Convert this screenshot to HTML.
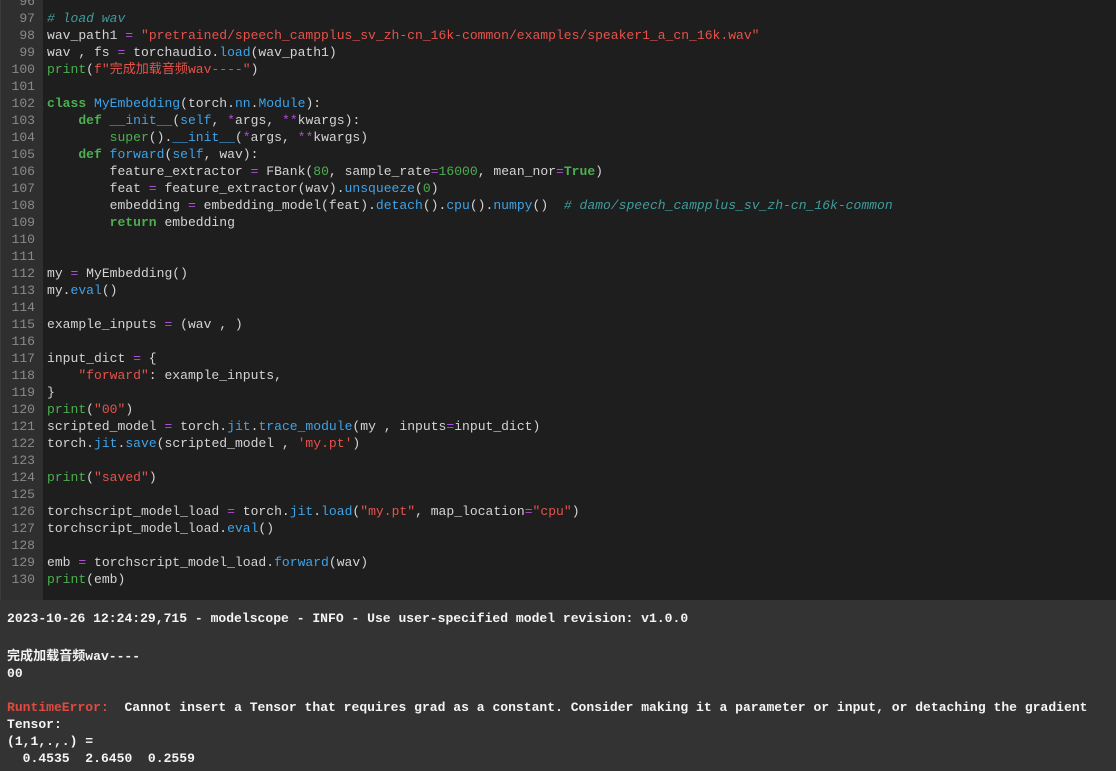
<!DOCTYPE html>
<html><head><meta charset="utf-8"><style>
html,body{margin:0;padding:0;width:1116px;height:771px;overflow:hidden;background:#1e1e1e}
body{font-family:"Liberation Mono","Noto Sans CJK SC",monospace;font-size:13.05px}
.code{position:absolute;left:0;top:0;width:1116px;height:600px;background:#1e1e1e}
.gut{position:absolute;left:0;top:0;width:42px;height:600px;background:#2f2f2f;border-left:1px solid #3a3a3a}
.lines{position:absolute;top:-7px;left:0;width:1116px}
.l{height:17px;line-height:17px;white-space:pre;position:relative;color:#d4d4d4}
.n{position:absolute;left:0;width:35px;text-align:right;color:#8a8a8a}
.t{position:absolute;left:47px}
.c{color:#3f9c9c;font-style:italic}.s{color:#e5534b}.k{color:#4caf50;font-weight:bold}.b{color:#3ea3e8}.o{color:#b14ed8}.g{color:#4caf50}
.out{position:absolute;left:0;top:600px;width:1116px;height:171px;background:#333333;color:#f4f4f4;font-weight:bold}
.out .l{color:#f4f4f4;padding-left:7px}
.err{color:#e04a3f}
</style></head><body>
<div class="code"><div class="gut"></div>
<div class="lines">
<div class="l"><span class="n">96</span><span class="t"></span></div>
<div class="l"><span class="n">97</span><span class="t"><span class="c"># load wav</span></span></div>
<div class="l"><span class="n">98</span><span class="t">wav_path1 <span class="o">=</span> <span class="s">"pretrained/speech_campplus_sv_zh-cn_16k-common/examples/speaker1_a_cn_16k.wav"</span></span></div>
<div class="l"><span class="n">99</span><span class="t">wav , fs <span class="o">=</span> torchaudio.<span class="b">load</span>(wav_path1)</span></div>
<div class="l"><span class="n">100</span><span class="t"><span class="g">print</span>(<span class="s">f"完成加载音频wav----"</span>)</span></div>
<div class="l"><span class="n">101</span><span class="t"></span></div>
<div class="l"><span class="n">102</span><span class="t"><span class="k">class</span> <span class="b">MyEmbedding</span>(torch.<span class="b">nn</span>.<span class="b">Module</span>):</span></div>
<div class="l"><span class="n">103</span><span class="t">    <span class="k">def</span> <span class="b">__init__</span>(<span class="b">self</span>, <span class="o">*</span>args, <span class="o">**</span>kwargs):</span></div>
<div class="l"><span class="n">104</span><span class="t">        <span class="g">super</span>().<span class="b">__init__</span>(<span class="o">*</span>args, <span class="o">**</span>kwargs)</span></div>
<div class="l"><span class="n">105</span><span class="t">    <span class="k">def</span> <span class="b">forward</span>(<span class="b">self</span>, wav):</span></div>
<div class="l"><span class="n">106</span><span class="t">        feature_extractor <span class="o">=</span> FBank(<span class="g">80</span>, sample_rate<span class="o">=</span><span class="g">16000</span>, mean_nor<span class="o">=</span><span class="k">True</span>)</span></div>
<div class="l"><span class="n">107</span><span class="t">        feat <span class="o">=</span> feature_extractor(wav).<span class="b">unsqueeze</span>(<span class="g">0</span>)</span></div>
<div class="l"><span class="n">108</span><span class="t">        embedding <span class="o">=</span> embedding_model(feat).<span class="b">detach</span>().<span class="b">cpu</span>().<span class="b">numpy</span>()  <span class="c"># damo/speech_campplus_sv_zh-cn_16k-common</span></span></div>
<div class="l"><span class="n">109</span><span class="t">        <span class="k">return</span> embedding</span></div>
<div class="l"><span class="n">110</span><span class="t"></span></div>
<div class="l"><span class="n">111</span><span class="t"></span></div>
<div class="l"><span class="n">112</span><span class="t">my <span class="o">=</span> MyEmbedding()</span></div>
<div class="l"><span class="n">113</span><span class="t">my.<span class="b">eval</span>()</span></div>
<div class="l"><span class="n">114</span><span class="t"></span></div>
<div class="l"><span class="n">115</span><span class="t">example_inputs <span class="o">=</span> (wav , )</span></div>
<div class="l"><span class="n">116</span><span class="t"></span></div>
<div class="l"><span class="n">117</span><span class="t">input_dict <span class="o">=</span> {</span></div>
<div class="l"><span class="n">118</span><span class="t">    <span class="s">"forward"</span>: example_inputs,</span></div>
<div class="l"><span class="n">119</span><span class="t">}</span></div>
<div class="l"><span class="n">120</span><span class="t"><span class="g">print</span>(<span class="s">"00"</span>)</span></div>
<div class="l"><span class="n">121</span><span class="t">scripted_model <span class="o">=</span> torch.<span class="b">jit</span>.<span class="b">trace_module</span>(my , inputs<span class="o">=</span>input_dict)</span></div>
<div class="l"><span class="n">122</span><span class="t">torch.<span class="b">jit</span>.<span class="b">save</span>(scripted_model , <span class="s">'my.pt'</span>)</span></div>
<div class="l"><span class="n">123</span><span class="t"></span></div>
<div class="l"><span class="n">124</span><span class="t"><span class="g">print</span>(<span class="s">"saved"</span>)</span></div>
<div class="l"><span class="n">125</span><span class="t"></span></div>
<div class="l"><span class="n">126</span><span class="t">torchscript_model_load <span class="o">=</span> torch.<span class="b">jit</span>.<span class="b">load</span>(<span class="s">"my.pt"</span>, map_location<span class="o">=</span><span class="s">"cpu"</span>)</span></div>
<div class="l"><span class="n">127</span><span class="t">torchscript_model_load.<span class="b">eval</span>()</span></div>
<div class="l"><span class="n">128</span><span class="t"></span></div>
<div class="l"><span class="n">129</span><span class="t">emb <span class="o">=</span> torchscript_model_load.<span class="b">forward</span>(wav)</span></div>
<div class="l"><span class="n">130</span><span class="t"><span class="g">print</span>(emb)</span></div>
</div></div>
<div class="out"><div style="position:absolute;top:10px;left:0;width:1116px">
<div class="l">2023-10-26 12:24:29,715 - modelscope - INFO - Use user-specified model revision: v1.0.0</div>
<div class="l"> </div>
<div class="l" style="height:21px;line-height:25px">完成加载音频wav----</div>
<div class="l">00</div>
<div class="l"> </div>
<div class="l"><span class="err">RuntimeError:</span>  Cannot insert a Tensor that requires grad as a constant. Consider making it a parameter or input, or detaching the gradient</div>
<div class="l">Tensor:</div>
<div class="l">(1,1,.,.) =</div>
<div class="l">  0.4535  2.6450  0.2559</div>
</div></div>
</body></html>
